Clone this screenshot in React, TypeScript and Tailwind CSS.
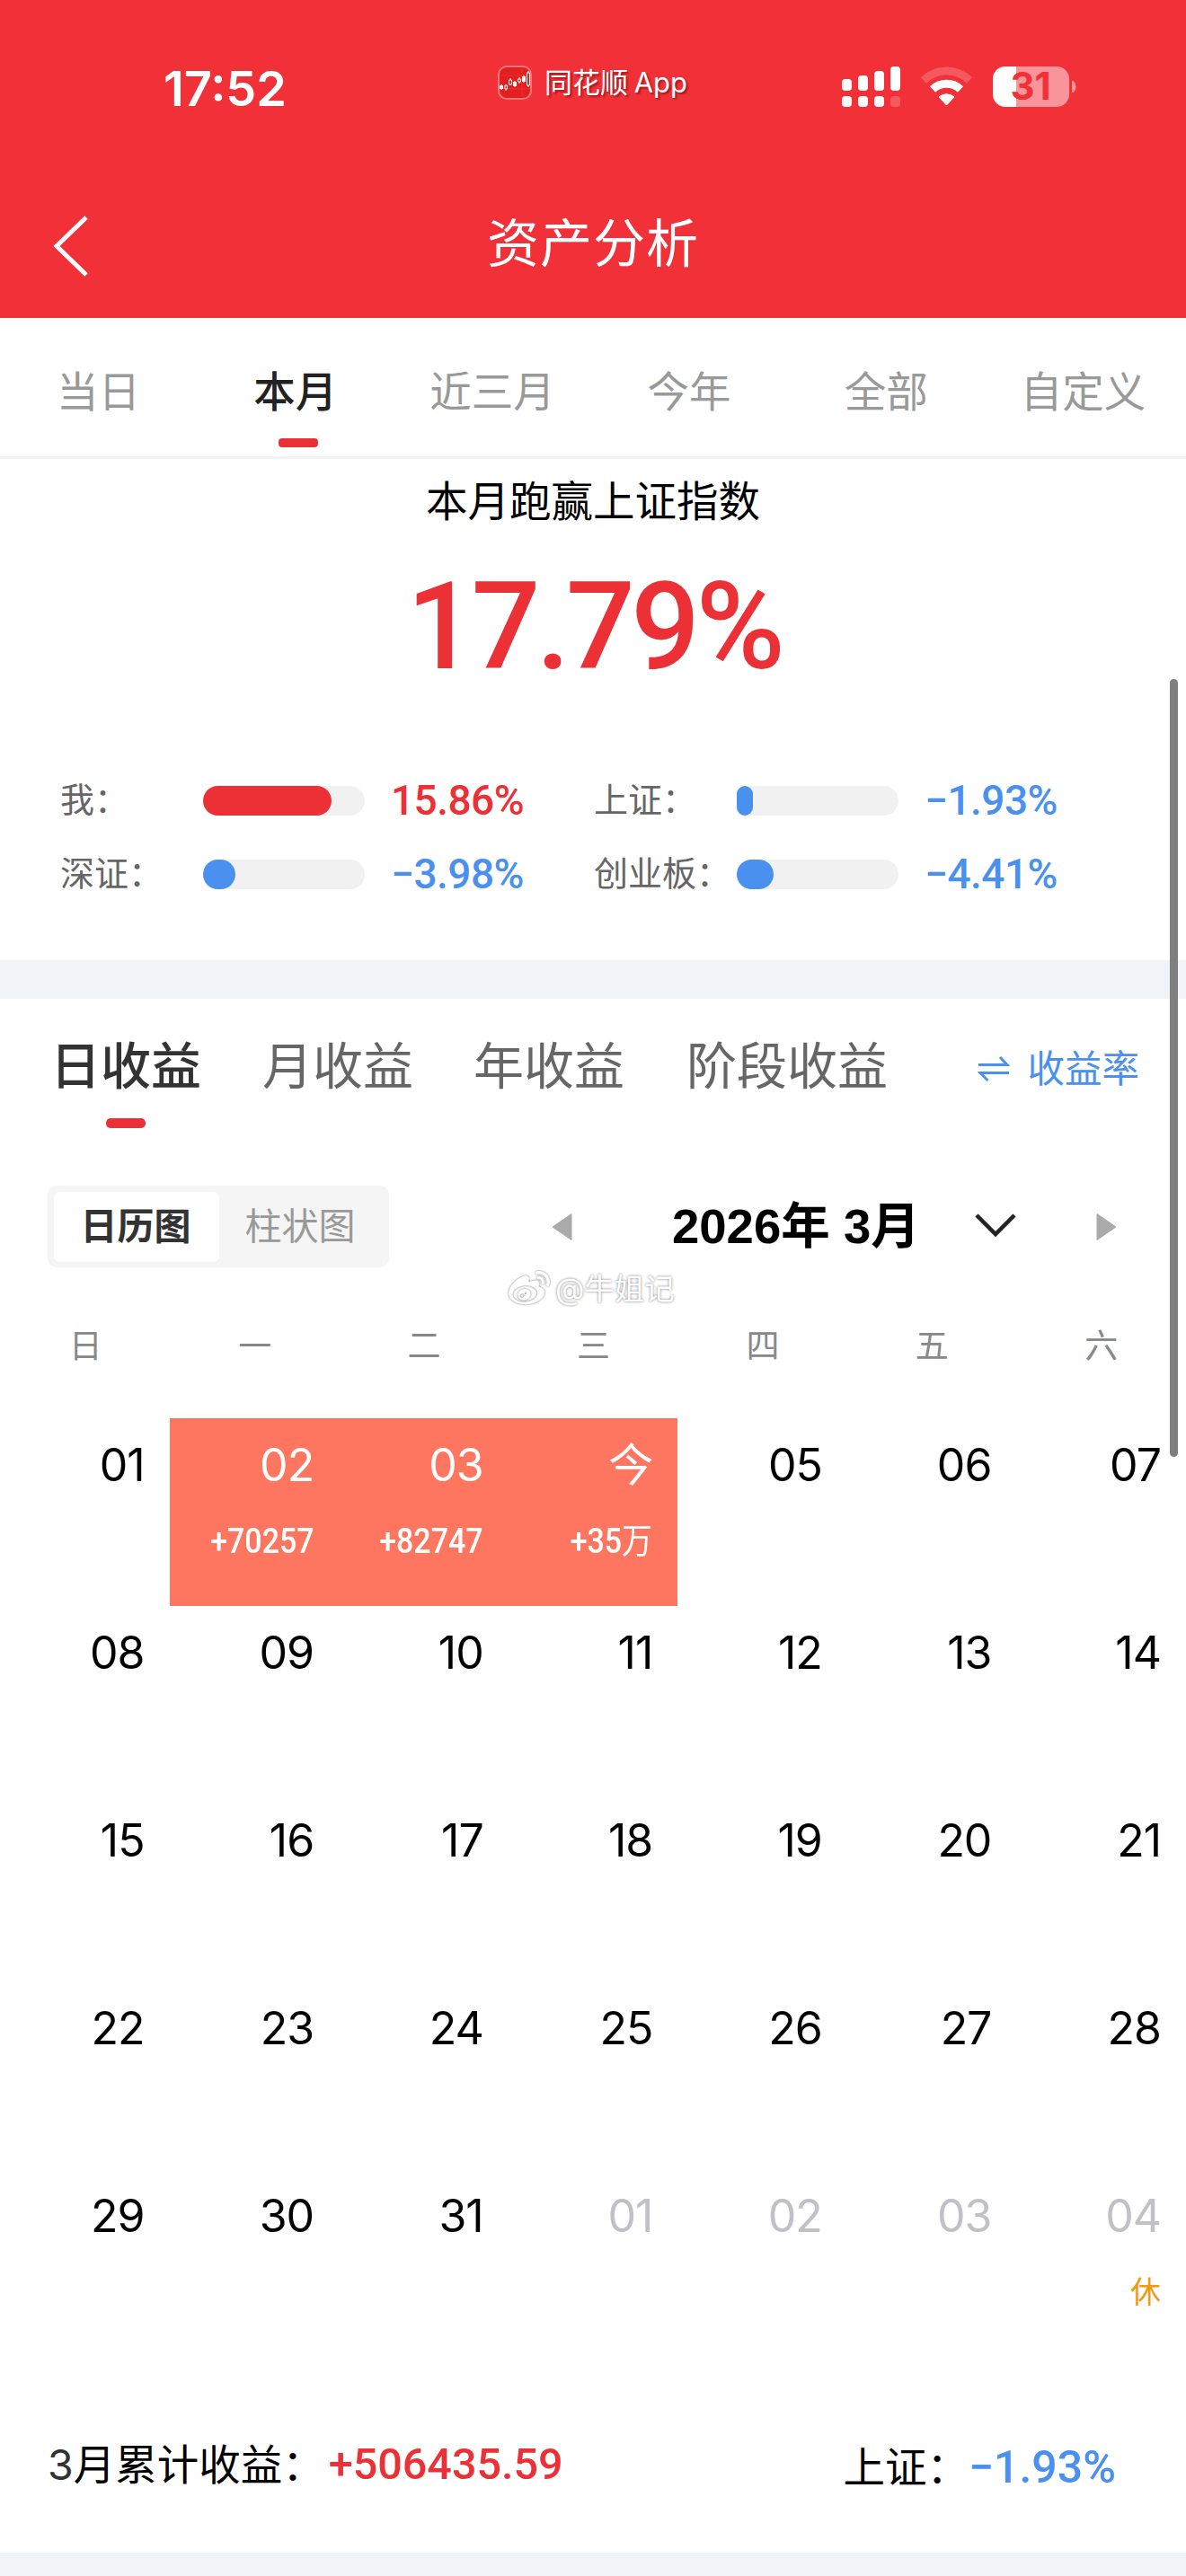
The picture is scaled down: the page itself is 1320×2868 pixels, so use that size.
import { FaWeibo } from 'react-icons/fa'

const CJK = "font-['Inter','Noto_Sans_CJK_SC',sans-serif]"

const periods = [
  { label: '当日' },
  { label: '本月', active: true },
  { label: '近三月' },
  { label: '今年' },
  { label: '全部' },
  { label: '自定义' }
]

const returns = [
  { label: '我：', value: '15.86%', width: 143, up: true },
  { label: '上证：', value: '−1.93%', width: 18, up: false },
  { label: '深证：', value: '−3.98%', width: 36, up: false },
  { label: '创业板：', value: '−4.41%', width: 41, up: false }
]

const weekdays = ['日', '一', '二', '三', '四', '五', '六']

type Day = { day: string; amount?: string; unit?: string; next?: boolean; rest?: boolean }

const pad = (n: number) => String(n).padStart(2, '0')

const days: Day[] = [
  ...Array.from({ length: 31 }, (_, i): Day => ({ day: pad(i + 1) })),
  ...Array.from({ length: 4 }, (_, i): Day => ({ day: pad(i + 1), next: true, rest: i === 3 }))
]
days[1] = { day: '02', amount: '+70257' }
days[2] = { day: '03', amount: '+82747' }
days[3] = { day: '今', amount: '+35', unit: '万' }

function StatusBar() {
  return (
    <div className="flex h-[190px] items-start pt-[65px] text-white">
      <div className="w-[500px] pl-[182px] pt-[2px] text-[54px] font-semibold leading-[64px]">17:52</div>
      <div className="flex w-[437px] items-center pl-[54px] pt-[8px]">
        <svg width="38" height="38" viewBox="0 0 38 38" fill="none">
          <rect x="1" y="1" width="36" height="36" rx="9" fill="#e3201f" stroke="#f5797c" strokeWidth="2" />
          <path d="M3 26h32M3 11h32M27 3v32" stroke="#e93c3c" strokeWidth="0.6" />
          <path d="M4 21v6M9 21v7M14 14v8M19 17v7M24 13v7M29 11v8M34 6v18" stroke="#fff" strokeWidth="1" />
          <path d="M2 22h4v4H2zM17 18h4v5h-4zM27 12h4v6h-4z" fill="#fff" />
          <path d="M8 22h2.500v4H8zM12.500 16h3v5h-3zM22.500 15h3v3h-3zM32.500 8h3v14h-3z" fill="#e3201f" stroke="#fff" strokeWidth="1" />
        </svg>
        <span className="ml-[14px] text-[31px] leading-[36px] [text-shadow:2px_2px_2px_rgba(90,0,0,0.5)] [word-spacing:-2px]">
          同花顺 App
        </span>
      </div>
      <svg className="mt-[8px] overflow-visible" width="264" height="48" viewBox="937 73 264 48">
        <g fill="#fff">
          <rect x="937" y="88" width="11" height="13" rx="4" />
          <rect x="955" y="84" width="11" height="17" rx="4" />
          <rect x="973" y="79" width="11" height="22" rx="4" />
          <rect x="991" y="74" width="11" height="27" rx="4" />
          <rect x="937" y="107" width="11" height="12" rx="4" />
          <rect x="955" y="107" width="11" height="12" rx="4" />
          <rect x="973" y="107" width="11" height="12" rx="4" />
          <rect x="991" y="107" width="11" height="12" rx="4" opacity="0.2" />
        </g>
        <path d="M1028 89.500a36.500 36.500 0 0 1 51 0" fill="none" stroke="#fff" strokeOpacity="0.2" strokeWidth="9" />
        <path d="M1038 99.500a22.500 22.500 0 0 1 31 0" fill="none" stroke="#fff" strokeWidth="9" />
        <path d="M1045 108a13 13 0 0 1 17 0l-8.500 9z" fill="#fff" stroke="#fff" strokeLinejoin="round" />
        <path d="M1119 74h12v45h-12a14 14 0 0 1-14-14V88a14 14 0 0 1 14-14z" fill="#fff" />
        <path d="M1131 74h45a14 14 0 0 1 14 14v17a14 14 0 0 1-14 14h-45z" fill="#f8959a" />
        <path d="M1193 89.500c6 2 6 12 0 14z" fill="#f8959a" />
        <text x="1147" y="111" textAnchor="middle" fontSize="42" fontWeight="700" fill="#f13038" fontFamily="Inter, sans-serif">31</text>
      </svg>
    </div>
  )
}

function ReturnRow({ item }: { item: (typeof returns)[number] }) {
  return (
    <div className="flex h-[82px] items-center">
      <span className="w-[159px] whitespace-nowrap pb-[2px] text-[38px] text-[#666]">{item.label}</span>
      <div className="h-[33px] w-[180px] shrink-0 rounded-full bg-[#f1f1f1]">
        <div
          className={`h-full rounded-full ${item.up ? 'bg-[#eb3036]' : 'bg-[#4a90ee]'}`}
          style={{ width: item.width }}
        />
      </div>
      <span
        className={`w-[206px] text-center font-[Roboto] text-[46px] font-medium tracking-[-0.5px] ${item.up ? 'text-[#eb3036]' : 'text-[#4a90ee]'}`}
      >
        {item.value}
      </span>
    </div>
  )
}

function DayCell({ item }: { item: Day }) {
  const color = item.amount ? 'bg-[#ff7660] text-white' : item.next ? 'text-[#c0c0c6]' : 'text-black'
  return (
    <div className={`flex h-[209px] flex-col items-end pr-[28px] pt-[20px] ${color}`}>
      <div className="text-[50px] leading-[64px] tracking-[-1px]">{item.day}</div>
      {item.amount && (
        <div className="mt-[21px] flex origin-right scale-x-[0.87] items-center whitespace-nowrap font-['Roboto','Noto_Sans_CJK_SC',sans-serif] text-[39px] font-medium leading-[64px]">
          {item.amount}
          {item.unit && <span className="font-normal">{item.unit}</span>}
        </div>
      )}
      {item.rest && <div className="mt-[21px] text-[34px] leading-[64px] text-[#ee9a15]">休</div>}
    </div>
  )
}

export default function App() {
  return (
    <div className={`relative h-[2868px] w-[1320px] overflow-hidden bg-white ${CJK}`}>
      <header className="h-[354px] bg-[#f13038]">
        <StatusBar />
        <div className="flex h-[164px] items-center">
          <svg className="ml-[58px] mt-[4px]" width="42" height="72" viewBox="0 0 42 72" fill="none">
            <path d="M38 4 5 36l33 32" stroke="#fff" strokeWidth="5" />
          </svg>
          <h1 className="w-[1120px] pb-[2px] text-center text-[58px] tracking-[1px] text-white">资产分析</h1>
        </div>
      </header>

      <nav className="flex h-[157px] border-b-[3px] border-[#f2f2f2] pr-[5px]">
        {periods.map((p) => (
          <div key={p.label} className="flex flex-1 flex-col items-center pt-[47px]">
            <span
              className={`text-[46.500px] leading-[70px] ${p.active ? 'font-medium text-[#222]' : 'text-[#999]'}`}
            >
              {p.label}
            </span>
            {p.active && <span className="ml-[6px] mt-[17px] h-[10px] w-[44px] rounded-[4px] bg-[#eb3036]" />}
          </div>
        ))}
      </nav>

      <section className="h-[558px]">
        <div className="pt-[12px] text-center text-[46.500px] leading-[70px] text-black">本月跑赢上证指数</div>
        <div className="pl-[2px] pt-[30px] text-center font-[Roboto] text-[135px] font-medium leading-[150px] tracking-[-4.500px] text-[#eb3036]">
          17.79%
        </div>
        <div className="mt-[77px] grid grid-cols-[594px_594px] pl-[67px]">
          {returns.map((r) => (
            <ReturnRow key={r.label} item={r} />
          ))}
        </div>
      </section>

      <div className="h-[43px] bg-[#f2f3f8]" />

      <section className="flex h-[208px] items-start pl-[56px] pt-[34px] text-[56px] leading-[82px] text-[#666]">
        <div className="flex flex-col items-center">
          <span className="font-medium text-[#333]">日收益</span>
          <span className="mt-[17px] h-[11px] w-[44px] rounded-[5px] bg-[#eb3036]" />
        </div>
        <span className="ml-[68px]">月收益</span>
        <span className="ml-[67px]">年收益</span>
        <span className="ml-[69px]">阶段收益</span>
        <div className="ml-auto flex items-center pr-[52px] pt-[3px] text-[41.500px] text-[#4a90ee]">
          <svg className="mr-[19px]" width="36" height="30" viewBox="0 0 36 30" fill="none">
            <path d="M1 10.500h32L25 2M35 19.500H3l8.500 8.500" stroke="#4a90ee" strokeWidth="3" />
          </svg>
          收益率
        </div>
      </section>

      <div className="flex h-[91px] items-center pl-[53px]">
        <div className="flex h-[91px] w-[380px] items-center rounded-[10px] bg-[#f5f5f5] pl-[7px] text-[41px]">
          <div className="flex h-[78px] w-[184px] items-center justify-center rounded-[6px] bg-white pr-[2px] font-bold text-[#333]">
            日历图
          </div>
          <div className="w-[180px] text-center text-[#999]">柱状图</div>
        </div>
        <svg className="ml-[181px]" width="24" height="32" viewBox="0 0 24 32">
          <path d="M22 1.500v29L1 16z" fill="#aaa" stroke="#aaa" strokeLinejoin="round" />
        </svg>
        <div className="ml-[110px] w-[272px] whitespace-nowrap font-['Liberation_Sans','Noto_Sans_CJK_SC',sans-serif] text-[54.500px] font-bold text-black">
          2026年 3月
        </div>
        <svg className="mb-[2px] ml-[65px]" width="46" height="30" viewBox="0 0 46 30" fill="none">
          <path d="M2 3l21 21L44 3" stroke="#222" strokeWidth="4.500" />
        </svg>
        <svg className="ml-[88px]" width="24" height="32" viewBox="0 0 24 32">
          <path d="M2 1.500v29L23 16z" fill="#aaa" stroke="#aaa" strokeLinejoin="round" />
        </svg>
      </div>

      <div className="grid h-[168px] grid-cols-7 pl-px pt-[60px] text-center text-[37px] leading-[56px] text-[#888]">
        {weekdays.map((w) => (
          <div key={w}>{w}</div>
        ))}
      </div>

      <div className="grid h-[1086px] auto-rows-[209px] grid-cols-7 content-start">
        {days.map((d, i) => (
          <DayCell key={i} item={d} />
        ))}
      </div>

      <div className="flex h-[177px] items-start justify-between pl-[53px] pr-[78px] pt-[44px] text-[46.500px] leading-[70px] text-black">
        <div className="flex whitespace-nowrap">
          <span className="text-[#333]">3</span>月累计收益：
          <span className="ml-[5px] font-[Roboto] text-[48.500px] font-medium text-[#eb3036]">+506435.59</span>
        </div>
        <div className="flex whitespace-nowrap pt-[3px]">
          上证：
          <span className="font-[Roboto] text-[50px] font-medium text-[#4a90ee]">−1.93%</span>
        </div>
      </div>

      <div className="h-[26px] bg-[#f2f3f8]" />

      {/* watermark */}
      <div className="absolute left-[566px] top-[1412px] flex items-center text-[33.500px] leading-[44px] text-white [text-shadow:0_0_3px_rgba(0,0,0,0.55)]">
        <FaWeibo className="mr-[6px] size-[46px] [filter:drop-shadow(0_0_1px_rgba(0,0,0,0.55))]" />
        @牛姐记
      </div>

      {/* scrollbar */}
      <div className="absolute left-[1302px] top-[756px] h-[866px] w-[9px] rounded-full bg-[#7f7f7f]" />
    </div>
  )
}
